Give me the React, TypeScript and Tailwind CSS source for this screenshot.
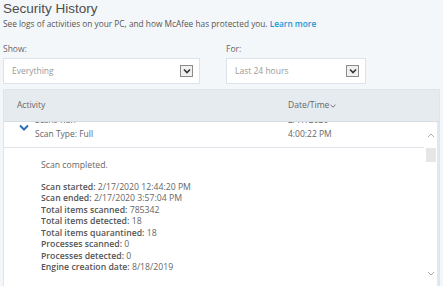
import React from "react";

const Select = ({ label, width }: { label: string; width: string }) => (
  <div className={`${width} h-[26px] bg-white border border-[#dde3ea] flex items-center justify-between pl-[8px] pr-[6px]`}>
    <span className="text-[8.5px] text-[#9a9a9a]">{label}</span>
    <div className="w-[13px] h-[12px] border border-[#8a8a8a] bg-[#f0f0f0] flex items-center justify-center">
      <svg width="8" height="6" viewBox="0 0 8 6">
        <path d="M1 1.5 L4 4.5 L7 1.5" fill="none" stroke="#333" strokeWidth="1.6" />
      </svg>
    </div>
  </div>
);

const details: [string, string][] = [
  ["Scan started:", "2/17/2020 12:44:20 PM"],
  ["Scan ended:", "2/17/2020 3:57:04 PM"],
  ["Total items scanned:", "785342"],
  ["Total items detected:", "18"],
  ["Total items quarantined:", "18"],
  ["Processes scanned:", "0"],
  ["Processes detected:", "0"],
  ["Engine creation date:", "8/18/2019"],
];

export default function App() {
  return (
    <div
      className="w-[443px] h-[286px] overflow-hidden bg-[#f4f7fa] flex flex-col"
      style={{ fontFamily: '"Open Sans", "Noto Sans", sans-serif' }}
    >
      <div className="px-[3px]">
        <div
          className="text-[13.5px] leading-[17px] text-[#4d4d4d]"
          style={{ fontFamily: '"Liberation Sans", Arial, sans-serif' }}
        >
          Security History
        </div>
        <div className="text-[8.3px] leading-[11px] mt-[1px] text-[#555]">
          See logs of activities on your PC, and how McAfee has protected you.{" "}
          <span className="text-[#1a95d5] font-semibold">Learn more</span>
        </div>
      </div>
      <div className="flex gap-[26px] px-[3px] mt-[15px]">
        <div className="flex flex-col">
          <div className="text-[8.5px] leading-[10px] text-[#666] mb-[4px]">Show:</div>
          <Select label="Everything" width="w-[197px]" />
        </div>
        <div className="flex flex-col">
          <div className="text-[8.5px] leading-[10px] text-[#666] mb-[4px]">For:</div>
          <Select label="Last 24 hours" width="w-[140px]" />
        </div>
      </div>
      <div className="mx-[3px] mt-[5px] flex-1 flex flex-col border border-[#dfe5eb] border-b-0">
        <div className="h-[32px] bg-[#e6ebf0] border-b border-[#d6dde4] flex items-center text-[8.5px] text-[#666]">
          <div className="w-[284px] pl-[13px]">Activity</div>
          <div className="flex items-center gap-[1px]">
            Date/Time
            <svg width="6" height="4" viewBox="0 0 6 4">
              <path d="M0.5 0.8 L3 3.2 L5.5 0.8" fill="none" stroke="#666" strokeWidth="0.9" />
            </svg>
          </div>
        </div>
        <div className="flex-1 flex bg-white relative">
          <div className="flex-1 flex flex-col">
            <div className="h-[26px] flex border-b border-[#dfe5eb] overflow-hidden relative">
              <div className="w-[31px] flex justify-end pr-[6px] pt-[2px]">
                <svg width="10" height="7" viewBox="0 0 10 7">
                  <path d="M1 1.5 L5 5.5 L9 1.5" fill="none" stroke="#2a6fb5" strokeWidth="2" />
                </svg>
              </div>
              <div className="w-[253px] flex flex-col text-[8.5px] leading-[11px] text-[#666] -mt-[8px]">
                <div>Scans Run</div>
                <div className="mt-[3px]">Scan Type: Full</div>
              </div>
              <div className="flex flex-col text-[8.5px] leading-[11px] text-[#666] -mt-[8px]">
                <div>2/17/2020</div>
                <div className="mt-[3px]">4:00:22 PM</div>
              </div>
            </div>
            <div className="pl-[37px] pt-[12px] text-[8.7px] leading-[11.5px] text-[#666]">
              <div className="mb-[10px]">Scan completed.</div>
              {details.map(([k, v]) => (
                <div key={k} className="whitespace-nowrap">
                  <span className="font-semibold text-[#555]">{k}</span> {v}
                </div>
              ))}
            </div>
          </div>
          <div className="w-[13px] flex flex-col items-center">
            <div className="h-[26px] flex items-center justify-center">
              <svg width="8" height="5" viewBox="0 0 8 5">
                <path d="M1 4 L4 1 L7 4" fill="none" stroke="#aaa" strokeWidth="1" />
              </svg>
            </div>
            <div className="w-[10px] h-[14px] bg-[#e6e6e6]" />
            <div className="flex-1" />
            <div className="h-[14px] mb-[6px] flex items-center justify-center">
              <svg width="8" height="5" viewBox="0 0 8 5">
                <path d="M1 1 L4 4 L7 1" fill="none" stroke="#aaa" strokeWidth="1" />
              </svg>
            </div>
          </div>
          <div className="w-[2px] bg-[#e2e8ee]" />
        </div>
      </div>
    </div>
  );
}
